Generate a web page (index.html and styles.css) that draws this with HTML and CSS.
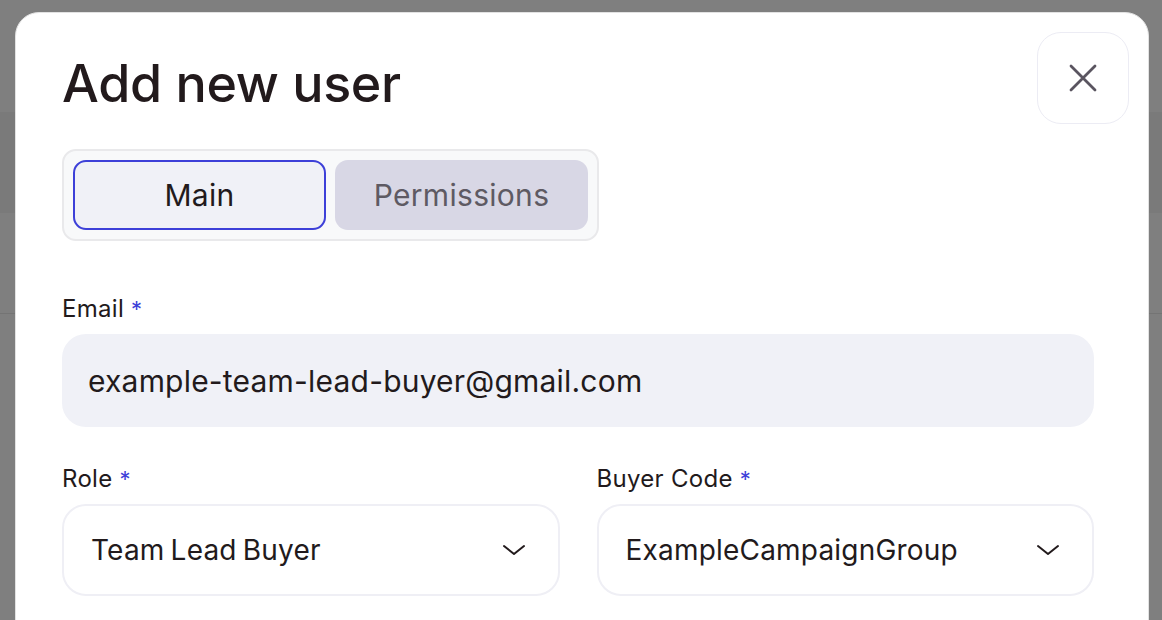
FILE: index.html
```html
<!DOCTYPE html>
<html lang="en">
<head>
<meta charset="utf-8">
<title>Add new user</title>
<link rel="stylesheet" href="styles.css">
</head>
<body>
<div class="page">
  <div class="page-topbar"></div>
  <div class="page-toolbar"></div>
  <div class="page-gap"></div>
  <div class="page-rule"></div>
</div>

<div class="modal" role="dialog" aria-labelledby="modal-title">
  <div class="modal-head">
    <h1 class="modal-title" id="modal-title">Add new user</h1>
    <button class="close-btn" type="button" aria-label="Close">
      <svg width="28" height="28" viewBox="0 0 28 28" fill="none" stroke="currentColor" stroke-width="2.8" stroke-linecap="round">
        <path d="M2 2 L26 26 M26 2 L2 26"/>
      </svg>
    </button>
  </div>

  <div class="tabs">
    <button class="tab tab-active" type="button">Main</button>
    <button class="tab" type="button">Permissions</button>
  </div>

  <div class="field field-email">
    <label class="field-label">Email <span class="req">*</span></label>
    <div class="input">example-team-lead-buyer@gmail.com</div>
  </div>

  <div class="field-row">
    <div class="field">
      <label class="field-label">Role <span class="req">*</span></label>
      <div class="select">
        <span>Team Lead Buyer</span>
        <svg class="chevron" width="24" height="12" viewBox="0 0 24 12" fill="none" stroke="currentColor" stroke-width="2" stroke-linecap="round" stroke-linejoin="round">
          <path d="M2 2 L12 10 L22 2"/>
        </svg>
      </div>
    </div>
    <div class="field">
      <label class="field-label">Buyer Code <span class="req">*</span></label>
      <div class="select">
        <span>ExampleCampaignGroup</span>
        <svg class="chevron" width="24" height="12" viewBox="0 0 24 12" fill="none" stroke="currentColor" stroke-width="2" stroke-linecap="round" stroke-linejoin="round">
          <path d="M2 2 L12 10 L22 2"/>
        </svg>
      </div>
    </div>
  </div>
</div>
</body>
</html>
```

FILE: styles.css
```css
* {
  box-sizing: border-box;
}

html, body {
  margin: 0;
  height: 100%;
  overflow: hidden;
}

body {
  background: #7f7f7f;
  font-family: Inter, "Noto Sans", sans-serif;
  color: #221a1c;
}

/* dimmed page behind the dialog */
.page {
  display: flex;
  flex-direction: column;
}

.page-topbar {
  height: 112px;
}

.page-toolbar {
  height: 101px;
  background: #7a7a7a;
}

.page-gap {
  height: 100px;
}

.page-rule {
  height: 1px;
  background: #747474;
}

/* dialog */
.modal {
  position: absolute;
  left: 15px;
  top: 12px;
  width: 1134px;
  height: 700px;
  background: #ffffff;
  border: 1px solid #e2e2e2;
  border-radius: 24px;
  padding: 19px 54px 0 46px;
}

.modal-head {
  display: flex;
  justify-content: space-between;
  align-items: flex-start;
  margin-right: -35px;
}

.modal-title {
  margin: 21px 0 0;
  font-size: 52px;
  line-height: 62px;
  font-weight: 500;
  letter-spacing: -0.3px;
  color: #221a1c;
}

.close-btn {
  width: 92px;
  height: 92px;
  border: 1px solid #ececf4;
  border-radius: 24px;
  background: #ffffff;
  color: #5a5560;
  display: flex;
  align-items: center;
  justify-content: center;
  padding: 0;
  cursor: pointer;
}

.tabs {
  margin-top: 25px;
  display: flex;
  gap: 9px;
  width: 537px;
  padding: 9px;
  border: 2px solid #e9e9eb;
  border-radius: 14px;
  background: #f8f9fa;
}

.tab {
  flex: 1;
  height: 70px;
  border: 2px solid transparent;
  border-radius: 13px;
  background: #d8d7e5;
  color: #5e5a63;
  font-family: Inter, "Noto Sans", sans-serif;
  font-size: 30px;
  font-weight: 400;
  letter-spacing: 0.3px;
  padding: 0;
}

.tab-active {
  background: #f0f1f7;
  border-color: #3d40d8;
  color: #221a1c;
}

.field {
  display: flex;
  flex-direction: column;
  gap: 11px;
}

.field-email {
  margin-top: 54px;
}

.field-label {
  font-size: 24px;
  line-height: 28px;
  letter-spacing: 0.3px;
  color: #221a1c;
}

.req {
  color: #3d40d8;
  font-size: 22px;
}

.input {
  height: 93px;
  border-radius: 24px;
  background: #f0f1f7;
  display: flex;
  align-items: center;
  padding: 0 26px;
  font-size: 30px;
  letter-spacing: 0.2px;
  color: #221a1c;
}

.field-row {
  margin-top: 38px;
  display: grid;
  grid-template-columns: 1fr 1fr;
  gap: 37px;
}

.select {
  height: 92px;
  border: 2px solid #efeff5;
  border-radius: 24px;
  background: #ffffff;
  display: flex;
  align-items: center;
  justify-content: space-between;
  padding: 0 32px 0 27px;
  font-size: 28px;
  letter-spacing: 0.2px;
  word-spacing: -2px;
  color: #221a1c;
}

.chevron {
  color: #221a1c;
  flex: none;
}
```
